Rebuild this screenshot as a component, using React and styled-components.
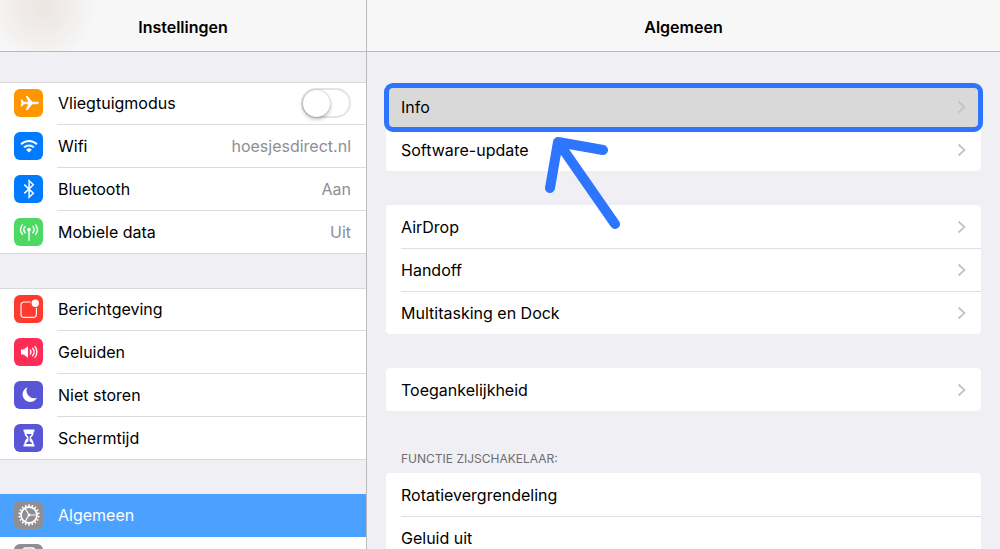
import React from 'react';
import styled, { createGlobalStyle, css } from 'styled-components';


const GlobalStyle = createGlobalStyle`
  * {
    box-sizing: border-box;
  }

  body {
    margin: 0;
    background: #efeff4;
    font-family: Inter, "Liberation Sans", sans-serif;
    font-size: 16px;
    color: #000;
    overflow: hidden;
  }
`;

const Page = styled.div`
  display: grid;
  grid-template-columns: minmax(240px, 367fr) 633fr;
  height: 100vh;
`;

const Pane = styled.section`
  display: flex;
  flex-direction: column;
  min-width: 0;
  min-height: 0;
  background: #efeff4;
  border-right: ${props => (props.$divided ? '1px solid #bcbcc0' : 'none')};
`;

const Header = styled.header`
  display: flex;
  flex-shrink: 0;
  align-items: center;
  justify-content: center;
  height: 52px;
  padding-top: 3px;
  border-bottom: 1px solid #b9b9bd;
  background: ${props => (props.$tinted
    ? 'radial-gradient(circle at 42px 8px, #ece5e2 0, #f0ecea 24px, #f7f7f7 54px)'
    : '#f7f7f7')};
`;

const Title = styled.h1`
  margin: 0;
  font-size: 16px;
  line-height: 20px;
  font-weight: 600;
`;

const Scroll = styled.div`
  flex: 1;
  min-height: 0;
  overflow-y: auto;
  scrollbar-width: none;
`;

const SidebarList = styled(Scroll)`
  display: flex;
  flex-direction: column;
  gap: 34px;
  padding-top: 30px;
`;

const DetailList = styled(Scroll)`
  display: flex;
  flex-direction: column;
  gap: 34px;
  padding: 33px 19px 0;
`;

const Group = styled.div`
  flex-shrink: 0;
  background: #fff;
  box-shadow: inset 0 1px #d9d9dd, inset 0 -1px #d9d9dd;
`;

const Card = styled.div`
  flex-shrink: 0;
  background: #fff;
  border-radius: 4px;
`;

const SectionLabel = styled.h2`
  margin: 0;
  padding: 7px 15px;
  font-size: 12px;
  line-height: 14px;
  font-weight: 400;
  color: #6d6d72;
`;

const rowStyle = css`
  position: relative;
  display: flex;
  align-items: center;
  width: 100%;
  height: 43px;
  border: 0;
  font: inherit;
  text-align: left;
`;

const SidebarRow = styled.button`
  ${rowStyle}
  gap: 15px;
  padding: 0 15px 1px 14px;
  background: ${props => (props.$active ? '#4aa1ff' : 'transparent')};
  color: ${props => (props.$active ? '#fff' : '#000')};

  & + &::before {
    content: "";
    position: absolute;
    top: -1px;
    left: 57px;
    right: 0;
    height: 1px;
    background: ${props => (props.$underActive ? 'transparent' : '#dcdce0')};
  }
`;

const DetailRow = styled.button`
  ${rowStyle}
  justify-content: space-between;
  padding: 0 15px;
  background: ${props => (props.$pressed ? '#d9d9d9' : 'transparent')};
  color: #000;

  & + &::before {
    content: "";
    position: absolute;
    top: 0;
    left: 15px;
    right: 0;
    height: 1px;
    background: #e0e0e3;
  }
`;

const RowLabel = styled.span`
  flex: 1;
  line-height: 20px;
`;

const RowValue = styled.span`
  line-height: 20px;
  color: #8e8e93;
`;

const IconTile = styled.span`
  display: block;
  width: 29px;
  height: 28px;
  border-radius: 6px;
  background: ${props => props.$color};

  svg {
    display: block;
    margin: 0 auto;
  }
`;

const Switch = styled.input`
  appearance: none;
  width: 50px;
  height: 30px;
  margin: 0;
  border: 2px solid #e3e3e5;
  border-radius: 15px;
  background: #fff;

  &::before {
    content: "";
    display: block;
    width: 27px;
    height: 27px;
    border-radius: 50%;
    background: #fff;
    box-shadow: 0 2px 4px rgba(0, 0, 0, 0.3), 0 0 1px rgba(0, 0, 0, 0.3);
  }

  &:checked {
    border-color: #4cd964;
    background: #4cd964;
  }

  &:checked::before {
    margin-left: 19px;
  }
`;

// ring lies over the row and its neighbours
const FocusRing = styled.span`
  position: absolute;
  z-index: 1;
  inset: -2px -2px -4px;
  border: 5px solid #2d74ff;
  border-radius: 9px;
  pointer-events: none;
`;

const Arrow = styled.svg`
  position: absolute;
  z-index: 2;
  top: 47px;
  left: 155px;
  pointer-events: none;
`;

const GEAR_TEETH = Array.from({ length: 18 }, (_, i) => i * 20);

const icons = {
  plane: (
    <path
      fill="#fff"
      d="M23.8 14c0-.7-1-1.2-2.3-1.2h-4.3L12.6 7h-1.9l2.5 5.8H8.7L7 10.6H5.6l.9 3.4-.9 3.4H7l1.7-2.2h4.5L10.7 21h1.9l4.6-5.8h4.3c1.3 0 2.3-.5 2.3-1.2z"
    />
  ),
  wifi: (
    <g fill="none" stroke="#fff" strokeWidth="2">
      <path d="M6.1 12.3a11.2 11.2 0 0 1 15.8 0" />
      <path d="M9.1 15.4a7 7 0 0 1 9.8 0" />
      <path fill="#fff" stroke="none" d="M11.2 17.7a4 4 0 0 1 5.6 0L14 20.5z" />
    </g>
  ),
  bluetooth: (
    <path
      fill="none"
      stroke="#fff"
      strokeWidth="1.5"
      d="M9.3 9.6l9 8.6-4.2 4V5.8l4.2 4-9 8.6"
    />
  ),
  antenna: (
    <g fill="none" stroke="#fff" strokeWidth="1.4" strokeLinecap="round">
      <path d="M14 12v10.3" />
      <circle cx="14" cy="11.6" r="1.9" fill="#fff" stroke="none" />
      <path d="M10.2 8.4a4.8 4.8 0 0 0 0 6.4M17.8 8.4a4.8 4.8 0 0 1 0 6.4" />
      <path d="M7.4 6.9a7.6 7.6 0 0 0 0 9.4M20.6 6.9a7.6 7.6 0 0 1 0 9.4" />
    </g>
  ),
  notification: (
    <g>
      <path
        fill="none"
        stroke="#fff"
        strokeWidth="1.1"
        d="M15.8 7H9.2A3.2 3.2 0 0 0 6 10.2v9a3.2 3.2 0 0 0 3.2 3.2h9a3.2 3.2 0 0 0 3.2-3.2v-6.5"
      />
      <circle cx="20.3" cy="8.3" r="3.7" fill="#fff" />
    </g>
  ),
  sound: (
    <g>
      <path fill="#fff" d="M6 11.6h2.600L13 8.200v11.600l-4.400-3.400H6z" />
      <g fill="none" stroke="#fff" strokeWidth="1.3" strokeLinecap="round">
        <path d="M15.3 12a3.4 3.4 0 0 1 0 4" />
        <path d="M17.6 10.2a6 6 0 0 1 0 7.6" />
        <path d="M19.9 8.4a9 9 0 0 1 0 11.2" />
      </g>
    </g>
  ),
  moon: (
    <path
      fill="#fff"
      d="M12.3 6.3a7.6 7.6 0 1 0 9.7 10.4A7.7 7.7 0 0 1 12.3 6.3z"
    />
  ),
  hourglass: (
    <g>
      <path
        fill="#fff"
        d="M8.500 5.400h11v2h-.8c0 3.300-1.300 4.900-3 6.600 1.700 1.700 3 3.300 3 6.600h.8v2h-11v-2h.8c0-3.300 1.300-4.900 3-6.600-1.700-1.700-3-3.300-3-6.600h-.8z"
      />
      <path
        fill="#5856d6"
        d="M11.300 10.100h5.400l-2.100 2.800v4.300c1.200.7 2.200 1.500 2.500 2.700h-6.200c.3-1.200 1.300-2 2.500-2.700v-4.300z"
      />
    </g>
  ),
  gear: (
    <g fill="none" stroke="#fff">
      <circle cx="14" cy="14" r="8" strokeWidth="1.8" />
      {GEAR_TEETH.map(angle => (
        <path
          key={angle}
          strokeWidth="1.5"
          d="M14 5.300V3.300"
          transform={`rotate(${angle} 14 14)`}
        />
      ))}
      <path strokeWidth="1.2" d="M14 14h7.500M14 14l-3.800-6.500M14 14l-3.800 6.500" />
      <circle cx="14" cy="14" r="1.4" fill="#fff" stroke="none" />
    </g>
  ),
  control: (
    <g fill="none" stroke="#fff" strokeWidth="1.5">
      <rect x="7" y="4" width="14" height="8" rx="4" />
      <rect x="7" y="15" width="14" height="8" rx="4" />
      <circle cx="11" cy="8" r="2" fill="#fff" />
      <circle cx="17" cy="19" r="2" fill="#fff" />
    </g>
  ),
};

const sidebarGroups = [
  [
    { label: 'Vliegtuigmodus', icon: 'plane', color: '#ff9500', toggle: true },
    { label: 'Wifi', icon: 'wifi', color: '#007aff', value: 'hoesjesdirect.nl' },
    { label: 'Bluetooth', icon: 'bluetooth', color: '#007aff', value: 'Aan' },
    { label: 'Mobiele data', icon: 'antenna', color: '#4cd964', value: 'Uit' },
  ],
  [
    { label: 'Berichtgeving', icon: 'notification', color: '#ff3b30' },
    { label: 'Geluiden', icon: 'sound', color: '#ff2d55' },
    { label: 'Niet storen', icon: 'moon', color: '#5856d6' },
    { label: 'Schermtijd', icon: 'hourglass', color: '#5856d6' },
  ],
  [
    { label: 'Algemeen', icon: 'gear', color: '#8e8e93' },
    { icon: 'control', color: '#8e8e93' },
  ],
];

const detailGroups = [
  ['Info', 'Software-update'],
  ['AirDrop', 'Handoff', 'Multitasking en Dock'],
  ['Toegankelijkheid'],
];

function Icon({ name, color }) {
  return (
    <IconTile $color={color}>
      <svg width="28" height="28" viewBox="0 0 28 28" aria-hidden="true">
        {icons[name]}
      </svg>
    </IconTile>
  );
}

function Chevron({ faint }) {
  return (
    <svg width="9" height="14" viewBox="0 0 9 14" aria-hidden="true">
      <path
        d="M1.500 1.500L7.500 7l-6 5.500"
        fill="none"
        stroke={faint ? '#c3c3c6' : '#c2c2c7'}
        strokeWidth="1.7"
      />
    </svg>
  );
}

class App extends React.Component {
  constructor() {
    super();
    this.state = {
      airplane: false,
      selected: 'gear',
    };
  }

  renderSidebarRow(item) {
    if (item.toggle) {
      return (
        <SidebarRow as="label" key={item.icon}>
          <Icon name={item.icon} color={item.color} />
          <RowLabel>{item.label}</RowLabel>
          <Switch
            type="checkbox"
            role="switch"
            checked={this.state.airplane}
            onChange={e => this.setState({ airplane: e.target.checked })}
          />
        </SidebarRow>
      );
    }

    return (
      <SidebarRow
        key={item.icon}
        type="button"
        $active={this.state.selected === item.icon}
        $underActive={!item.label}
        onClick={() => this.setState({ selected: item.icon })}
      >
        <Icon name={item.icon} color={item.color} />
        {item.label && <RowLabel>{item.label}</RowLabel>}
        {item.value && <RowValue>{item.value}</RowValue>}
      </SidebarRow>
    );
  }

  renderDetailRow(label) {
    const highlighted = label === 'Info';
    return (
      <DetailRow key={label} type="button" $pressed={highlighted}>
        <RowLabel>{label}</RowLabel>
        <Chevron faint={highlighted} />
        {highlighted && (
          <>
            <FocusRing />
            <Arrow width="80" height="98" viewBox="0 0 80 98" aria-hidden="true">
              <path
                d="M9 56L17 10l45 8M17 10l57 82"
                fill="none"
                stroke="#2d74ff"
                strokeWidth="10"
                strokeLinecap="round"
                strokeLinejoin="round"
              />
            </Arrow>
          </>
        )}
      </DetailRow>
    );
  }

  render() {
    return (
      <>
        <GlobalStyle />
        <Page>
          <Pane $divided>
            <Header $tinted>
              <Title>Instellingen</Title>
            </Header>
            <SidebarList as="nav">
              {sidebarGroups.map(group => (
                <Group key={group[0].icon}>
                  {group.map(item => this.renderSidebarRow(item))}
                </Group>
              ))}
            </SidebarList>
          </Pane>

          <Pane as="main">
            <Header>
              <Title>Algemeen</Title>
            </Header>
            <DetailList>
              {detailGroups.map(group => (
                <Card key={group[0]}>
                  {group.map(label => this.renderDetailRow(label))}
                </Card>
              ))}
              <div>
                <SectionLabel>FUNCTIE ZIJSCHAKELAAR:</SectionLabel>
                <Card>
                  <DetailRow type="button">Rotatievergrendeling</DetailRow>
                  <DetailRow type="button">Geluid uit</DetailRow>
                </Card>
              </div>
            </DetailList>
          </Pane>
        </Page>
      </>
    );
  }
}

export default App;
